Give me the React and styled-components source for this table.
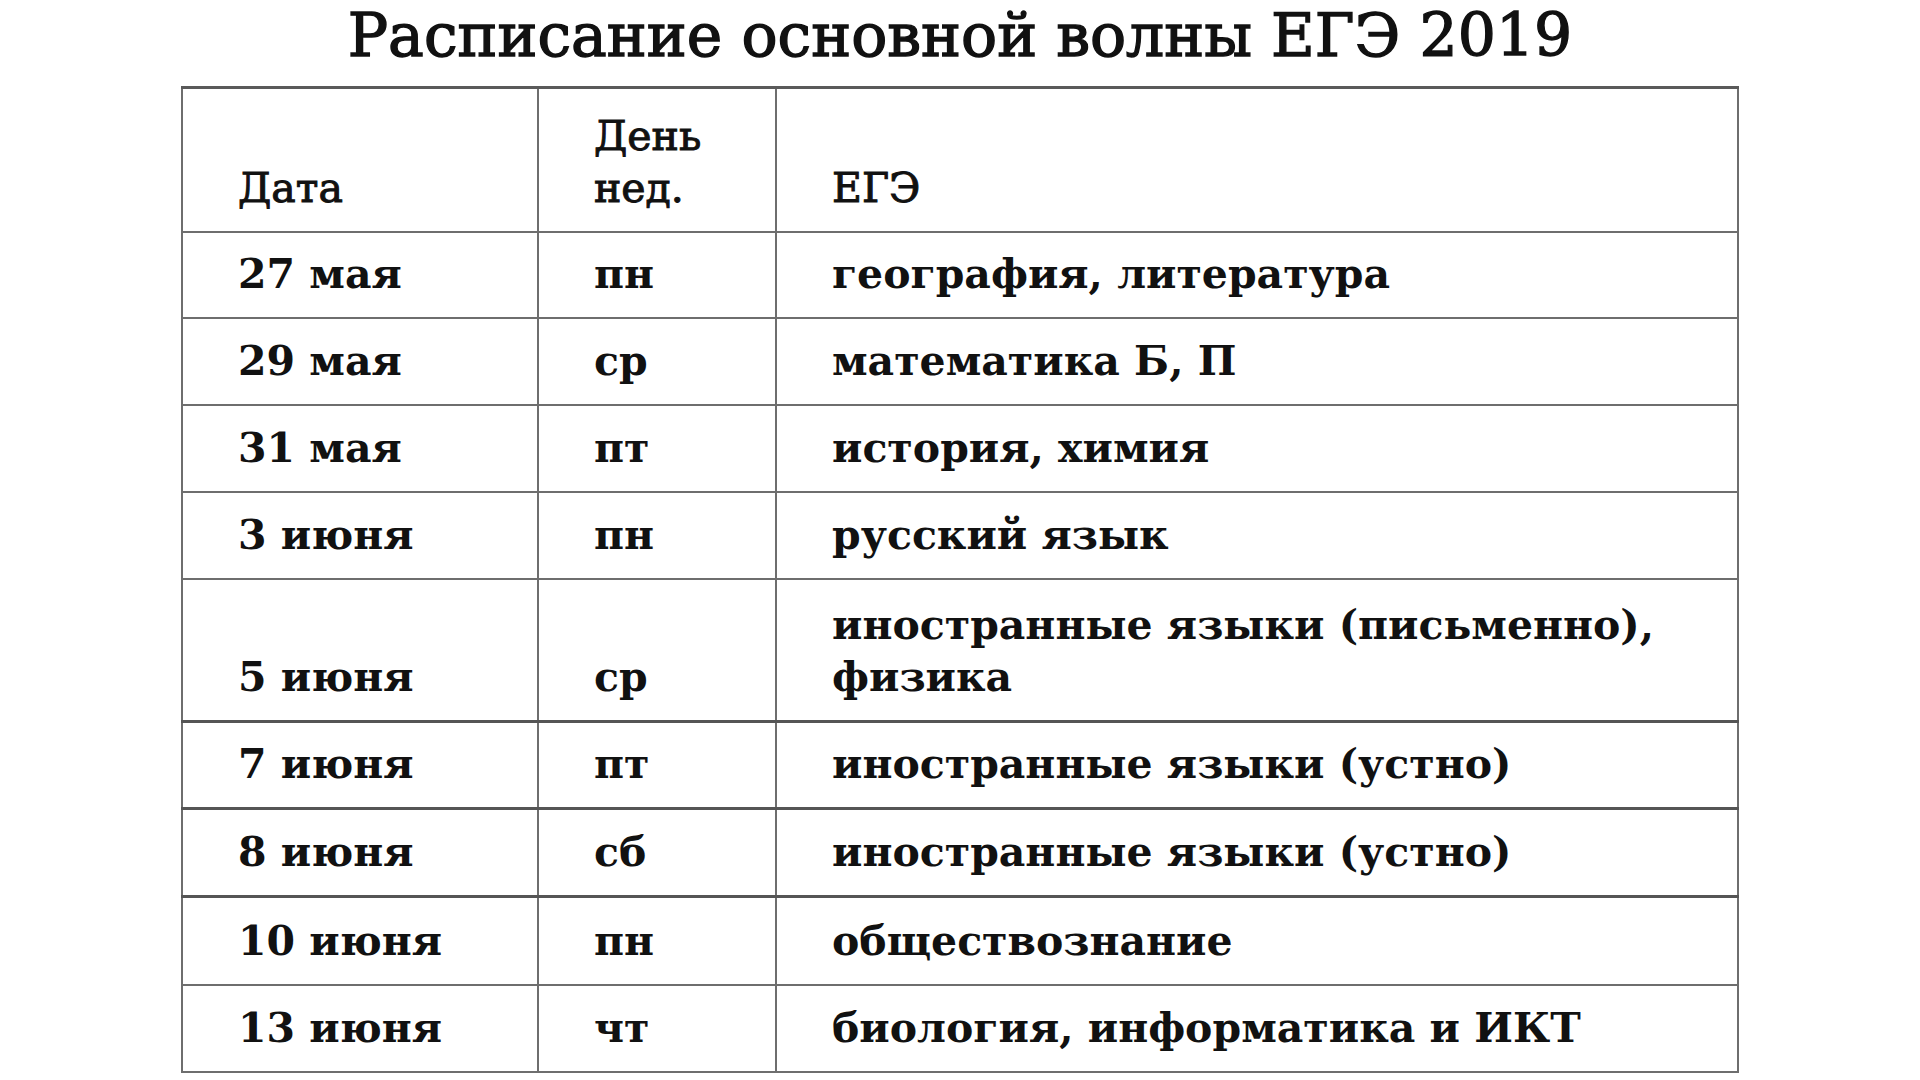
import React from "react";
import styled, { createGlobalStyle } from "styled-components";

const GlobalStyle = createGlobalStyle`
  html, body {
    margin: 0;
    padding: 0;
    background: #ffffff;
  }
  body {
    font-family: "DejaVu Serif", "Liberation Serif", serif;
    color: #111111;
    width: 1920px;
    height: 1080px;
    overflow: hidden;
  }
`;

const Page = styled.main`
  display: flex;
  flex-direction: column;
  align-items: center;
  width: 1920px;
  height: 1080px;
`;

const Title = styled.h1`
  margin: 0;
  font-family: "DejaVu Serif", "Liberation Serif", serif;
  font-weight: 400;
  font-size: 60px;
  line-height: 70px;
  color: #111111;
  -webkit-text-stroke: 1.4px #111111;
  white-space: nowrap;
`;

const Table = styled.table`
  margin-top: 16px;
  width: 1556px;
  border-collapse: collapse;
  table-layout: fixed;
  border-top: 3px solid #5a5a5a;
  border-left: 2px solid #6e6e6e;
  border-right: 2px solid #6e6e6e;
  border-bottom: 2px solid #6e6e6e;
`;

const Col = styled.col`
  width: ${(p) => p.$w}px;
`;

const Row = styled.tr`
  height: ${(p) => p.$h}px;
  & > td {
    border-top: ${(p) => (p.$thick ? "3px solid #555555" : "2px solid #6e6e6e")};
  }
`;

const Cell = styled.td`
  border-left: 2px solid #6e6e6e;
  padding: 0 16px 17px 55px;
  vertical-align: bottom;
  font-family: "DejaVu Serif", "Liberation Serif", serif;
  font-size: 41px;
  line-height: 52px;
  font-weight: ${(p) => (p.$head ? 400 : 700)};
  ${(p) => (p.$head ? "-webkit-text-stroke: 1px #111111;" : "")}
  color: #111111;
  white-space: nowrap;
`;

const rows = [
  { date: "27 мая", day: "пн", exam: ["география, литература"], h: 86 },
  { date: "29 мая", day: "ср", exam: ["математика Б, П"], h: 87 },
  { date: "31 мая", day: "пт", exam: ["история, химия"], h: 87 },
  { date: "3 июня", day: "пн", exam: ["русский язык"], h: 87 },
  {
    date: "5 июня",
    day: "ср",
    exam: ["иностранные языки (письменно),", "физика"],
    h: 143,
  },
  { date: "7 июня", day: "пт", exam: ["иностранные языки (устно)"], h: 87, thick: true },
  { date: "8 июня", day: "сб", exam: ["иностранные языки (устно)"], h: 88, thick: true },
  { date: "10 июня", day: "пн", exam: ["обществознание"], h: 88, thick: true },
  { date: "13 июня", day: "чт", exam: ["биология, информатика и ИКТ"], h: 87 },
];

function Lines({ items }) {
  return items.map((t, i) => (
    <React.Fragment key={i}>
      {i > 0 && <br />}
      {t}
    </React.Fragment>
  ));
}

export default function App() {
  return (
    <>
      <GlobalStyle />
      <Page>
        <Title>Расписание основной волны ЕГЭ 2019</Title>
        <Table>
          <colgroup>
            <Col $w={356} />
            <Col $w={238} />
            <Col $w={962} />
          </colgroup>
          <tbody>
            <Row $h={144}>
              <Cell $head>Дата</Cell>
              <Cell $head>
                <Lines items={["День", "нед."]} />
              </Cell>
              <Cell $head>ЕГЭ</Cell>
            </Row>
            {rows.map((r) => (
              <Row key={r.date} $h={r.h} $thick={r.thick}>
                <Cell>{r.date}</Cell>
                <Cell>{r.day}</Cell>
                <Cell>
                  <Lines items={r.exam} />
                </Cell>
              </Row>
            ))}
          </tbody>
        </Table>
      </Page>
    </>
  );
}
